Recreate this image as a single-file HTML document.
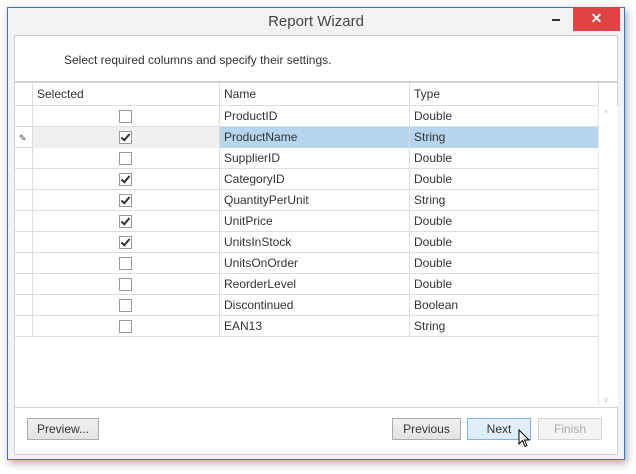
<!DOCTYPE html>
<html><head><style>
body{margin:0;width:636px;height:474px;background:#fff;font-family:"Liberation Sans",sans-serif;font-size:12px;color:#333;position:relative;overflow:hidden}
.win{position:absolute;left:7px;top:7px;width:616px;height:451px;border:1px solid #2b79c8;background:#f3f3f3;box-shadow:2px 3px 8px rgba(0,0,0,.35)}
.title{position:absolute;left:0;right:0;top:5px;text-align:center;font-size:15px;color:#444}
.close{position:absolute;right:4px;top:-1px;width:47px;height:24px;background:#e04343;color:#fff;text-align:center;font-size:14px;line-height:23px;font-weight:bold}
.min{position:absolute;right:64px;top:11px;width:8px;height:2px;background:#333}
.panel{position:absolute;left:6px;top:27px;width:602px;height:418px;border:1px solid #d0d0d0;background:#fff}
.hdrtxt{position:absolute;left:49px;top:17px;font-size:12px}
.grid{position:absolute;left:0;top:45px;width:602px;height:324px;border-top:2px solid #d4d4d4;border-bottom:1px solid #d4d4d4}
.r{position:absolute;left:0;width:583px;height:20px;border-bottom:1px solid #ddd}
.c{position:absolute;top:0;height:21px;line-height:21px;border-left:1px solid #ddd;padding-left:4px;box-sizing:border-box}
.cb{position:absolute;left:86px;top:4px;width:11px;height:11px;border:1px solid #999;background:#fff}
.cb.k::after{content:"";position:absolute;left:3px;top:0px;width:3px;height:7px;border:solid #333;border-width:0 2px 2px 0;transform:rotate(40deg)}
.btn{position:absolute;top:382px;height:20px;border:1px solid #acacac;background:linear-gradient(#f0f0f0,#e3e3e3);text-align:center;line-height:20px;font-size:12px}
</style></head><body>
<div class="win">
<div class="title">Report Wizard</div>
<div class="min"></div>
<div class="close">✕</div>
<div class="panel">
<div class="hdrtxt">Select required columns and specify their settings.</div>
<div class="grid">
<div class="r" style="top:0;height:22px;border-bottom:1px solid #ddd">
<div class="c" style="left:17px;width:187px;height:22px;line-height:22px">Selected</div>
<div class="c" style="left:204px;width:190px;height:22px;line-height:22px">Name</div>
<div class="c" style="left:394px;width:189px;height:22px;line-height:22px">Type</div>
<div class="c" style="left:583px;width:19px;height:22px"></div>
</div>
<div id="rows"></div>
<div style="position:absolute;left:583px;top:23px;width:19px;height:300px;background:#fff;border-left:1px solid #e8e8e8"><div style="position:absolute;top:2px;left:5px;color:#ccc;font-size:9px">^</div><div style="position:absolute;bottom:2px;left:5px;color:#ccc;font-size:9px">v</div></div>
</div>
<div class="btn" style="left:12px;width:70px">Preview...</div>
<div class="btn" style="left:377px;width:67px">Previous</div>
<div class="btn" style="left:452px;width:62px;border-color:#7eb4ea;background:linear-gradient(#e5f1fb,#dcecfc)">Next</div>
<div class="btn" style="left:523px;width:62px;color:#aaa;border-color:#d5d5d5;background:#f4f4f4">Finish</div>
<svg style="position:absolute;left:503px;top:393px" width="14" height="20" viewBox="0 0 14 20"><path d="M1 1 L1 15 L4.5 11.5 L7 17.5 L9 16.5 L6.5 11 L11 11 Z" fill="#fff" stroke="#000" stroke-width="1"/></svg>
</div>
</div>
<script>
var d=[["ProductID","Double",0],["ProductName","String",1],["SupplierID","Double",0],["CategoryID","Double",1],["QuantityPerUnit","String",1],["UnitPrice","Double",1],["UnitsInStock","Double",1],["UnitsOnOrder","Double",0],["ReorderLevel","Double",0],["Discontinued","Boolean",0],["EAN13","String",0]];
var h="";d.forEach(function(x,i){var s=i==1;h+='<div class="r" style="top:'+(23+21*i)+'px">'+
'<div class="c" style="left:0;width:17px;border:0;">'+(s?'<span style="font-size:9px;color:#444">✎</span>':'')+'</div>'+
'<div class="c" style="left:17px;width:187px;'+(s?'background:#f0f0f0':'')+'"><div class="cb'+(x[2]?' k':'')+'"></div></div>'+
'<div class="c" style="left:204px;width:190px;'+(s?'background:#b5d6ee':'')+'">'+x[0]+'</div>'+
'<div class="c" style="left:394px;width:189px;'+(s?'background:#b5d6ee':'')+'">'+x[1]+'</div></div>';});
document.getElementById("rows").innerHTML=h;
</script>
</body></html>
